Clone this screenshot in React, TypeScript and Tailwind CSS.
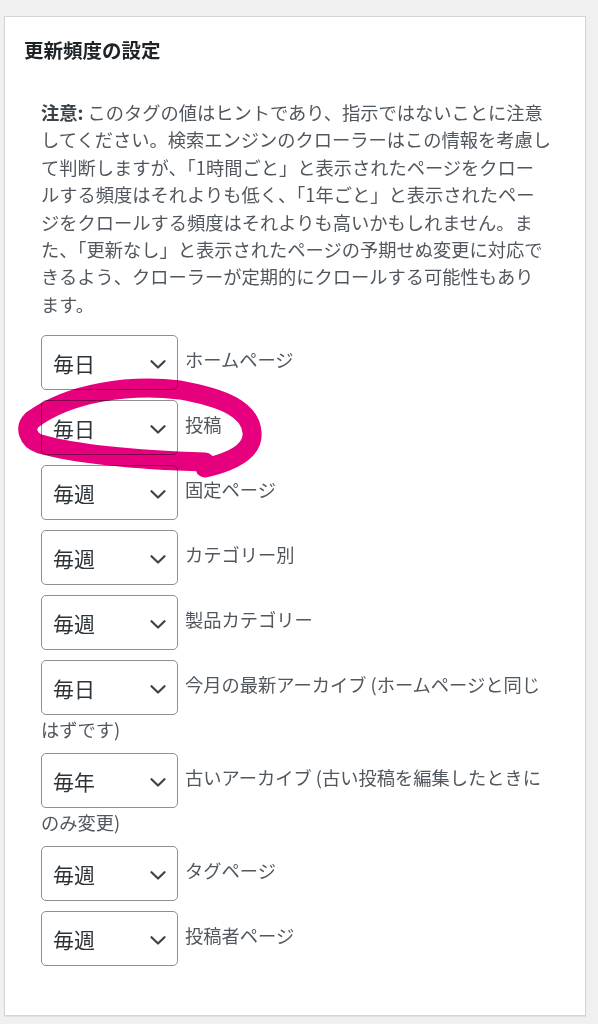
import React from "react";

const FONT = '"Noto Sans CJK JP", "Noto Sans", sans-serif';

function Select({ value }: { value: string }) {
  return (
    <span className="relative inline-flex items-center align-middle w-[137px] h-[55px] border border-[#8c8f94] rounded-[5px] bg-white pl-[11px] pt-[2px] mr-[7px] text-[21px] text-[#2c3338] leading-none">
      {value}
      <svg
        className="absolute right-[11px] top-[24px]"
        width="16"
        height="9"
        viewBox="0 0 16 9"
        fill="none"
      >
        <path d="M1.5 1.2 L8 7.5 L14.5 1.2" stroke="#3c434a" strokeWidth="2.2" strokeLinecap="round" strokeLinejoin="round" />
      </svg>
    </span>
  );
}

function Row({ value, children }: { value: string; children: React.ReactNode }) {
  return (
    <div className="mb-[10px] leading-[28px] text-[18.25px] text-[#50575e]">
      <Select value={value} />
      {children}
    </div>
  );
}

export default function App() {
  const lines = [
    "してください。検索エンジンのクローラーはこの情報を考慮し",
    "て判断しますが、「1時間ごと」と表示されたページをクロー",
    "ルする頻度はそれよりも低く、「1年ごと」と表示されたペー",
    "ジをクロールする頻度はそれよりも高いかもしれません。ま",
    "た、「更新なし」と表示されたページの予期せぬ変更に対応で",
    "きるよう、クローラーが定期的にクロールする可能性もあり",
    "ます。",
  ];
  return (
    <div className="relative min-h-[1024px] bg-[#f0f0f1] pt-[16px] pl-[4px]" style={{ fontFamily: FONT }}>
      <div className="w-[582px] bg-white border border-[#d3d4d8] shadow-[0_1px_1px_rgba(0,0,0,0.06)] pb-[39px]">
        <h2 className="pl-[19px] pt-[19px] text-[19.5px] leading-[27px] font-bold text-[#1d2327]">更新頻度の設定</h2>
        <div className="pl-[36px] pt-[36px] text-[18.25px] leading-[27.4px] text-[#50575e]">
          <div className="whitespace-nowrap">
            <b className="font-bold text-[#3c434a]">注意:</b> このタグの値はヒントであり、指示ではないことに注意
          </div>
          {lines.map((l) => (
            <div key={l} className="whitespace-nowrap">
              {l}
            </div>
          ))}
        </div>
        <div className="pl-[36px] pt-[17px]">
          <Row value="毎日">ホームページ</Row>
          <Row value="毎日">投稿</Row>
          <Row value="毎週">固定ページ</Row>
          <Row value="毎週">カテゴリー別</Row>
          <Row value="毎週">製品カテゴリー</Row>
          <Row value="毎日">
            今月の最新アーカイブ (ホームページと同じ
            <br />
            はずです)
          </Row>
          <Row value="毎年">
            古いアーカイブ (古い投稿を編集したときに
            <br />
            のみ変更)
          </Row>
          <Row value="毎週">タグページ</Row>
          <Row value="毎週">投稿者ページ</Row>
        </div>
      </div>
      <svg
        className="absolute left-0 top-0 pointer-events-none mix-blend-multiply"
        width="598"
        height="1024"
        viewBox="0 0 598 1024"
        fill="none"
      >
        <path
          d="M205 468 C235 461 254 450 252 432 C250 410 225 398 180 390 C130 384 70 392 32 420 C24 428 28 440 40 444 C80 455 140 460 205 462"
          stroke="#e6007e"
          strokeWidth="19"
          strokeLinecap="round"
          strokeLinejoin="round"
        />
      </svg>
    </div>
  );
}
